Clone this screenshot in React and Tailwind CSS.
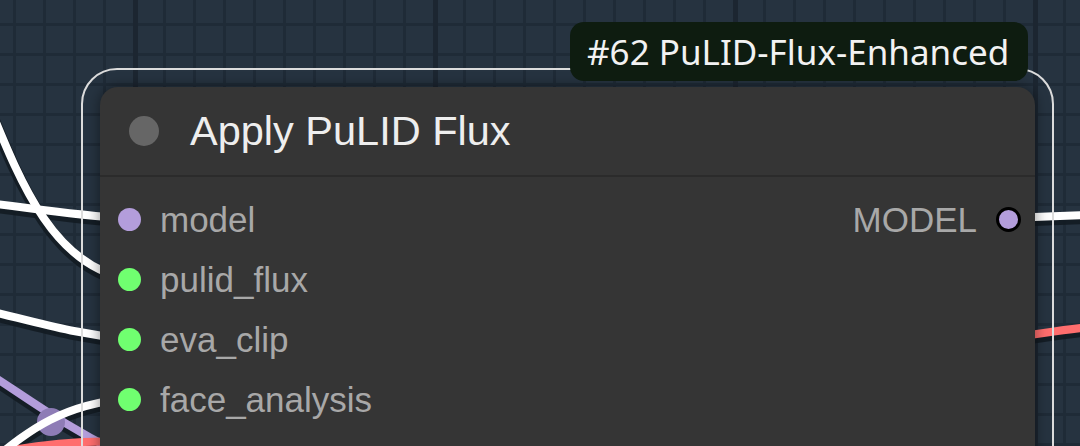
import React from "react";

const sans = { fontFamily: '"Liberation Sans", Arial, sans-serif' };

// wires on the canvas: [path, colour]
const wires = [
  ["M -30 60 C 10 150, 40 265, 130 279", "#ffffff"],
  ["M -40 200 C 20 206, 60 214, 130 219", "#ffffff"],
  ["M -60 300 C 20 316, 60 333, 130 339", "#ffffff"],
  ["M -20 368 C 20 392, 60 425, 130 458", "#b39ddb"],
  ["M -20 456 C 40 444, 80 440, 130 442", "#ff6e6e"],
  ["M -10 462 C 30 430, 60 405, 130 398", "#ffffff"],
  ["M 1008 218 C 1040 217, 1060 216, 1090 215", "#ffffff"],
  ["M 1000 339 C 1040 334, 1060 330, 1090 327", "#ff6e6e"],
];

const inputs = [
  { name: "model", color: "bg-[#b39ddb]", out: "MODEL" },
  { name: "pulid_flux", color: "bg-[#70ff70]" },
  { name: "eva_clip", color: "bg-[#70ff70]" },
  { name: "face_analysis", color: "bg-[#70ff70]" },
  { name: "image", color: "bg-[#64b5f6]" },
];

function Wires() {
  return (
    <svg className="absolute inset-0" width="1080" height="446">
      {wires.map(([d], i) => (
        <path
          key={"s" + i}
          d={d}
          transform="translate(0 3)"
          fill="none"
          stroke="#121a21"
          strokeOpacity="0.85"
          strokeWidth="12"
        />
      ))}
      {wires.map(([d, c], i) => (
        <React.Fragment key={i}>
          <path d={d} fill="none" stroke={c} strokeWidth="8" />
          {i === 3 && <circle cx="51" cy="422" r="14" fill="#8e7cb6" />}
        </React.Fragment>
      ))}
    </svg>
  );
}

export default function App() {
  return (
    <div
      className="relative w-[1080px] h-[446px] overflow-hidden bg-[#263340] bg-[linear-gradient(to_right,#1c2631_5px,transparent_5px),linear-gradient(to_right,#1f2b37_3px,transparent_3px),linear-gradient(to_bottom,#1f2b37_3px,transparent_3px)] bg-[size:300px_100%,30px_30px,30px_30px] bg-[position:133px_0,13px_0,0_23px]"
      style={sans}
    >
      <Wires />

      {/* node */}
      <div className="absolute left-[100px] top-[87px] w-[935px] h-[480px] bg-[#353535] rounded-t-[18px] shadow-[0_0_14px_rgba(0,0,0,0.45)]">
        <div className="h-[90px] flex items-center border-b-2 border-[#2b2b2b]">
          <div className="ml-[29px] w-[30px] h-[30px] rounded-full bg-[#666666]" />
          <div className="ml-[31px] text-[41.5px] text-[#eeeeee] leading-none">
            Apply PuLID Flux
          </div>
        </div>
        <div className="pt-[12px]">
          {inputs.map((r) => (
            <div key={r.name} className="h-[60px] flex items-center">
              <div className={`ml-[18px] w-[23px] h-[23px] rounded-full ${r.color}`} />
              <div className="ml-[19px] text-[35px] text-[#a8a8a8] leading-none">
                {r.name}
              </div>
              {r.out && (
                <div className="ml-auto mr-[14px] flex items-center gap-[19px]">
                  <span className="text-[35px] text-[#a8a8a8] leading-none">{r.out}</span>
                  <div className="w-[25px] h-[25px] rounded-full bg-[#b39ddb] border-[3px] border-black" />
                </div>
              )}
            </div>
          ))}
        </div>
      </div>

      {/* group selection outline */}
      <div className="absolute left-[81px] top-[68px] w-[973px] h-[520px] rounded-[36px] border-[2.5px] border-[#dcdcdc]" />

      {/* badge */}
      <div
        className="absolute left-[570px] top-[22px] w-[458px] h-[59px] rounded-[14px] bg-[#0e1c10] flex items-center pl-[17px] text-[35px] text-[#f2f2f2] leading-none"
        style={{ fontFamily: '"Noto Sans", "Open Sans", sans-serif' }}
      >
        #62 PuLID-Flux-Enhanced
      </div>
    </div>
  );
}
